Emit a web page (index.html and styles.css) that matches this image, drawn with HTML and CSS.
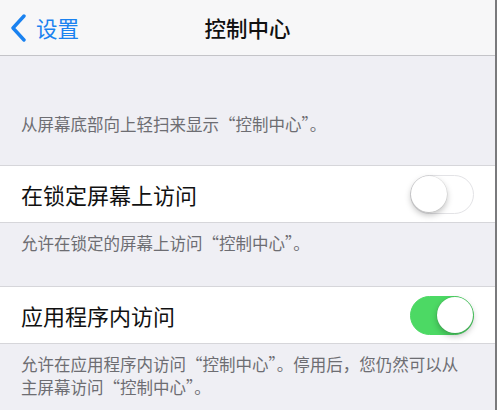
FILE: index.html
```html
<!DOCTYPE html>
<html lang="zh-CN">

<head>
    <meta charset="UTF-8">
    <meta name="viewport" content="width=device-width, initial-scale=1.0">
    <title>控制中心</title>

    <link rel="stylesheet" href="styles.css">
</head>

<body>

    <div class="screen">
        <!-- Navigation Bar -->
        <div class="nav-bar">
            <div class="nav-back">
                <svg class="chevron" width="17" height="28" viewBox="0 0 17 28">
                    <path d="M14 2 L3 14 L14 26" fill="none" stroke="#1a82f0" stroke-width="3.4" stroke-linecap="round" stroke-linejoin="round" />
                </svg>
                <span>设置</span>
            </div>
            <div class="nav-title">控制中心</div>
        </div>

        <!-- Intro -->
        <p class="intro">从屏幕底部向上轻扫来显示“控制中心”。</p>

        <!-- Lock Screen -->
        <div class="cell">
            <span class="cell-label">在锁定屏幕上访问</span>
            <div class="switch"><div class="knob"></div></div>
        </div>
        <p class="footer">允许在锁定的屏幕上访问“控制中心”。</p>

        <!-- Within Apps -->
        <div class="cell">
            <span class="cell-label">应用程序内访问</span>
            <div class="switch on"><div class="knob"></div></div>
        </div>
        <p class="footer">允许在应用程序内访问“控制中心”。停用后，您仍然可以从主屏幕访问“控制中心”。</p>
    </div>

</body>

</html>
```

FILE: styles.css
```css
/* General Styling */
body {
    font-family: "Noto Sans CJK SC", "Noto Sans", sans-serif;
    background-color: #efeff4;
    margin: 0;
    padding: 0;
    color: #000000;
}

.screen {
    width: 495px;
    height: 410px;
    overflow: hidden;
    border-right: 2px solid #7a7a7c;
    background-color: #efeff4;
}

/* Navigation Bar */
.nav-bar {
    position: relative;
    height: 55px;
    background-color: #f7f7f8;
    border-bottom: 1px solid #c4c4c8;
    display: flex;
    align-items: center;
    justify-content: center;
}

.nav-back {
    position: absolute;
    left: 10px;
    top: 0;
    height: 55px;
    display: flex;
    align-items: center;
    gap: 9px;
    color: #1a82f0;
    font-size: 21.5px;
}

.nav-title {
    font-size: 21.5px;
    font-weight: 500;
    color: #111111;
}

/* Intro text */
.intro {
    margin: 0;
    padding: 57px 21px 30px;
    font-size: 16.5px;
    line-height: 22px;
    color: #6d6d72;
}

/* Table cells */
.cell {
    height: 56px;
    background-color: #ffffff;
    border-top: 1px solid #d6d6da;
    border-bottom: 1px solid #d6d6da;
    display: flex;
    align-items: center;
    justify-content: space-between;
    padding: 0 21px;
}

.cell-label {
    font-size: 22px;
    color: #111111;
}

/* Footer text */
.footer {
    margin: 0;
    padding: 9px 28px 31px 21px;
    font-size: 16.5px;
    line-height: 23px;
    color: #6d6d72;
}

/* Switches */
.switch {
    width: 64px;
    height: 39px;
    box-sizing: border-box;
    border-radius: 20px;
    border: 1.5px solid #e3e3e6;
    background-color: #ffffff;
    position: relative;
}

.knob {
    position: absolute;
    left: 0;
    top: 0;
    width: 36px;
    height: 36px;
    border-radius: 50%;
    background-color: #ffffff;
    box-shadow: 0 3px 6px rgba(0, 0, 0, 0.25), 0 0 0 0.5px rgba(0, 0, 0, 0.12);
}

.switch.on {
    background-color: #4cd964;
    border-color: #4cd964;
}

.switch.on .knob {
    left: auto;
    right: 0;
}
```
